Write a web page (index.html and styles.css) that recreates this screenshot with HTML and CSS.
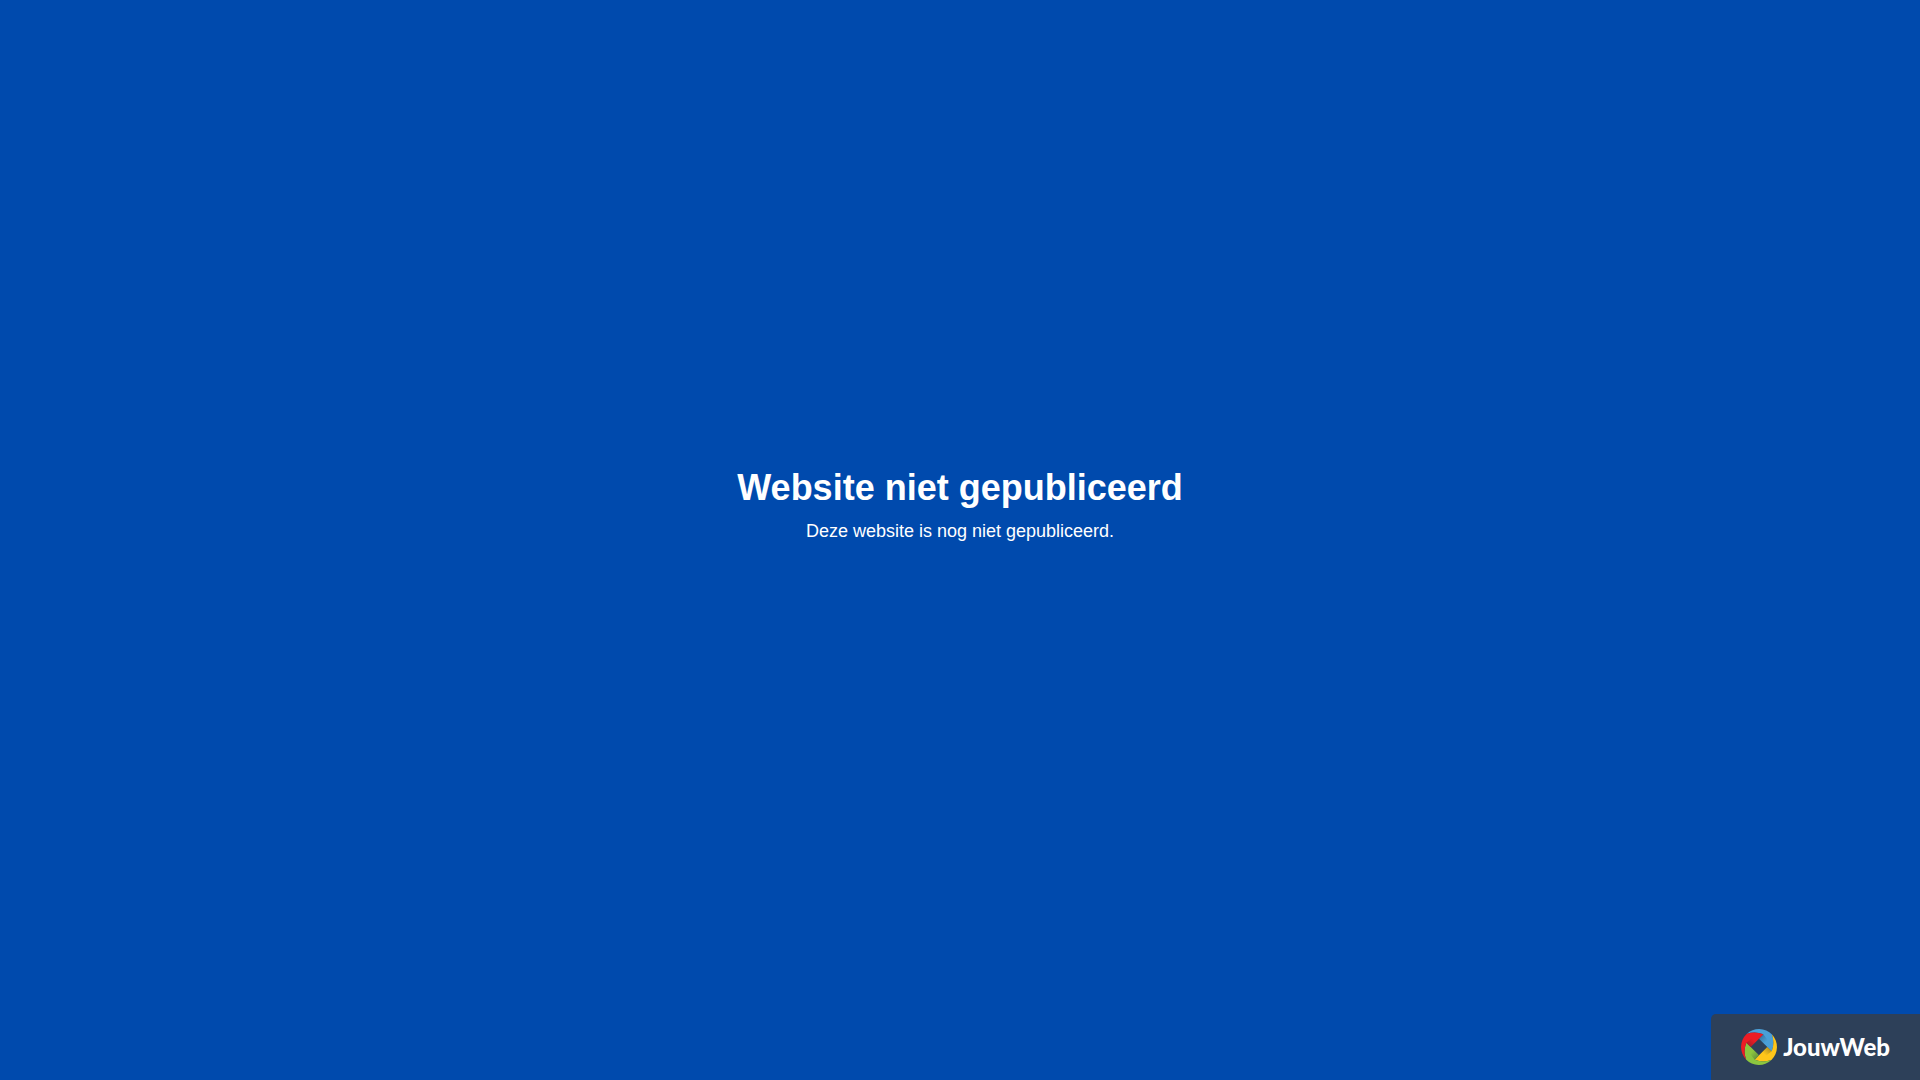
FILE: index.html
```html
<!DOCTYPE html>
<html lang="nl">
<head>
<meta charset="utf-8">
<meta name="viewport" content="width=device-width, initial-scale=1">
<title>Website niet gepubliceerd</title>
<link rel="stylesheet" href="styles.css">
</head>
<body>
<main class="message">
  <h1 class="message-title">Website niet gepubliceerd</h1>
  <p class="message-text">Deze website is nog niet gepubliceerd.</p>
</main>
<footer class="footer">
  <a class="brand" href="#">
    <svg class="brand-icon" viewBox="-18 -18 36 36" aria-hidden="true">
      <defs>
        <linearGradient id="shade" gradientUnits="userSpaceOnUse" x1="2" y1="-10" x2="7" y2="-5">
          <stop offset="0" stop-color="#123" stop-opacity=".28"/>
          <stop offset="1" stop-color="#123" stop-opacity="0"/>
        </linearGradient>
        <path id="blade" d="M-12.4-13A18 18 0 0 1 13-12.4Q16-4 12.7 4.3L8.3 0 0-8.3 4.3-12.7Q-4-16-12.4-13Z"/>
        <path id="fold" d="M4.3-12.7L0-8.3 8.3 0 11-4Z" fill="url(#shade)"/>
      </defs>
      <g fill="#4a9fd8"><use href="#blade"/><use href="#fold"/></g>
      <g fill="#ffc61a" transform="rotate(90)"><use href="#blade"/><use href="#fold"/></g>
      <g fill="#8cc63f" transform="rotate(180)"><use href="#blade"/><use href="#fold"/></g>
      <g fill="#ed1c24" transform="rotate(270)"><use href="#blade"/><use href="#fold"/></g>
    </svg>
    <span class="brand-name">JouwWeb</span>
  </a>
</footer>
</body>
</html>
```
FILE: styles.css
```css
body {
  margin: 0;
  min-height: 100vh;
  display: flex;
  flex-direction: column;
  background: #004aad;
  color: #fff;
  font-family: "Liberation Sans", Arial, sans-serif;
}

.message {
  flex: 1;
  display: flex;
  flex-direction: column;
  align-items: center;
  justify-content: center;
  text-align: center;
}

.message-title {
  margin: 0 0 8px;
  font-size: 36px;
  line-height: 40px;
}

.message-text {
  margin: 0;
  font-size: 18px;
  line-height: 30px;
}

.footer {
  display: flex;
  justify-content: flex-end;
}

.brand {
  display: flex;
  align-items: center;
  gap: 6px;
  padding: 15px 30px;
  border-top-left-radius: 5px;
  background: #2d4059;
  color: #fff;
  text-decoration: none;
}

.brand-icon {
  width: 36px;
  height: 36px;
}

.brand-name {
  font-family: Lato, sans-serif;
  font-size: 24px;
  font-weight: 900;
  line-height: 36px;
}
```
